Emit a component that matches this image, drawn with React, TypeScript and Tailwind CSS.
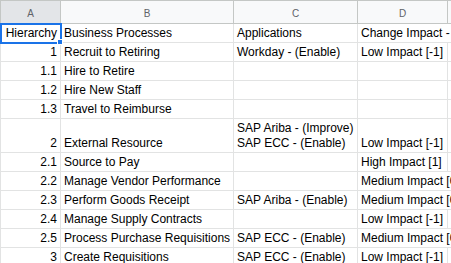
type Row = {
  a: string;
  b: string;
  c?: string[];
  d?: string;
  spill?: boolean;
  tall?: boolean;
};

const rows: Row[] = [
  { a: "Hierarchy", b: "Business Processes", c: ["Applications"], d: "Change Impact - Overall", spill: true },
  { a: "1", b: "Recruit to Retiring", c: ["Workday - (Enable)"], d: "Low Impact [-1]" },
  { a: "1.1", b: "Hire to Retire" },
  { a: "1.2", b: "Hire New Staff" },
  { a: "1.3", b: "Travel to Reimburse" },
  { a: "2", b: "External Resource", c: ["SAP Ariba - (Improve)", "SAP ECC - (Enable)"], d: "Low Impact [-1]", tall: true },
  { a: "2.1", b: "Source to Pay", d: "High Impact [1]" },
  { a: "2.2", b: "Manage Vendor Performance", d: "Medium Impact [0]", spill: true },
  { a: "2.3", b: "Perform Goods Receipt", c: ["SAP Ariba - (Enable)"], d: "Medium Impact [0]", spill: true },
  { a: "2.4", b: "Manage Supply Contracts", d: "Low Impact [-1]" },
  { a: "2.5", b: "Process Purchase Requisitions", c: ["SAP ECC - (Enable)"], d: "Medium Impact [0]", spill: true },
  { a: "3", b: "Create Requisitions", c: ["SAP ECC - (Enable)"], d: "Low Impact [-1]" },
];

const cell = "flex shrink-0 flex-col justify-end border-r border-[#e2e3e3] px-[3px] pb-[1px] leading-[15px] whitespace-nowrap";

function HeaderCell({ label, w, active }: { label: string; w: string; active?: boolean }) {
  return (
    <div
      className={`${w} flex h-full shrink-0 items-center justify-center border-r border-[#c4c7c5] pt-[2px] text-[10px] text-[#5f6368] ${
        active ? "bg-[#e3e5e8]" : "bg-[#f8f9fa]"
      }`}
    >
      {label}
    </div>
  );
}

export default function App() {
  return (
    <div
      className="relative h-[263px] w-[451px] overflow-hidden bg-white text-[12px] text-black"
      style={{ fontFamily: '"Liberation Sans", Arial, sans-serif' }}
    >
      <div className="flex h-[24px] border-b border-t border-[#c4c7c5] border-l">
        <HeaderCell label="A" w="w-[60px]" active />
        <HeaderCell label="B" w="w-[173px]" />
        <HeaderCell label="C" w="w-[124px]" />
        <HeaderCell label="D" w="w-[90px]" />
        <div className="flex-1 bg-[#f8f9fa]" />
      </div>

      {rows.map((r, i) => (
        <div
          key={i}
          className={`flex border-b border-l border-[#e2e3e3] ${r.tall ? "h-[34px]" : "h-[19px]"}`}
        >
          <div className={`${cell} w-[60px] items-end`}>{r.a}</div>
          <div className={`${cell} w-[173px]`}>{r.b}</div>
          <div className={`${cell} w-[124px]`}>
            {(r.c ?? []).map((line) => (
              <span key={line}>{line}</span>
            ))}
          </div>
          <div className={`${cell} w-[90px] overflow-visible ${r.spill ? "border-r-transparent" : ""}`}>
            {r.d}
          </div>
          <div className="flex-1" />
        </div>
      ))}

      {/* selection on A1 */}
      <div className="pointer-events-none absolute left-[0px] top-[23px] h-[21px] w-[62px] border-2 border-[#1a73e8]" />
      <div className="pointer-events-none absolute left-[57px] top-[39px] h-[6px] w-[6px] border border-white bg-[#1a73e8]" />
    </div>
  );
}
